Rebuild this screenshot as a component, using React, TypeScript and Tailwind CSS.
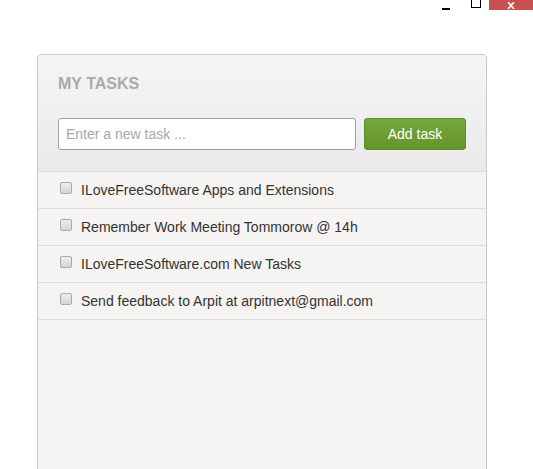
import React from "react";

const tasks = [
  "ILoveFreeSoftware Apps and Extensions",
  "Remember Work Meeting Tommorow @ 14h",
  "ILoveFreeSoftware.com New Tasks",
  "Send feedback to Arpit at arpitnext@gmail.com",
];

export default function App() {
  return (
    <div className="relative w-[533px] h-[469px] bg-white overflow-hidden" style={{ fontFamily: '"Liberation Sans", Arial, sans-serif' }}>
      {/* window controls */}
      <div className="absolute top-0 right-0 flex items-start">
        <div className="w-[8px] h-[2px] bg-black mt-[8px] mr-[21px]" />
        <div className="w-[10px] h-[8px] border border-black border-t-0 mr-[8px]" />
        <div className="w-[44px] h-[10px] bg-[#c75050] flex items-center justify-center">
          <svg width="8" height="7" viewBox="0 0 8 7"><path d="M1 0 L7 7 M7 0 L1 7" stroke="white" strokeWidth="1.6" /></svg>
        </div>
      </div>

      <div className="pt-[54px] pl-[37px]">
        <div className="w-[450px] h-[430px] border border-[#c9c9c9] rounded-[4px] bg-[#f5f4f2] overflow-hidden">
          <div className="bg-gradient-to-b from-[#f5f5f5] to-[#eaeaea] border-b border-[#dcdcdc] px-[20px] pt-[20px] pb-[21px]">
            <div className="text-[16px] font-bold text-[#aaaaaa] leading-[18px]">MY TASKS</div>
            <div className="flex items-center mt-[25px]">
              <div className="w-[298px] h-[32px] bg-white border border-[#a0a0a0] rounded-[3px] flex items-center px-[7px] text-[14px] text-[#a8a8a8]">
                Enter a new task ...
              </div>
              <div className="ml-[8px] w-[102px] h-[32px] rounded-[3px] bg-gradient-to-b from-[#77a83c] to-[#64952d] border border-[#5f8c2a] flex items-center justify-center text-white text-[14px]">
                Add task
              </div>
            </div>
          </div>
          {tasks.map((t) => (
            <div key={t} className="h-[37px] border-b border-[#dedede] flex items-center pl-[22px] text-[14px] text-[#333333]">
              <div className="w-[12px] h-[12px] border border-[#a9a9a9] rounded-[2px] bg-gradient-to-b from-[#eeeeee] to-[#d4d4d4] mr-[9px] mt-[-4px]" />
              <span>{t}</span>
            </div>
          ))}
        </div>
      </div>
    </div>
  );
}
